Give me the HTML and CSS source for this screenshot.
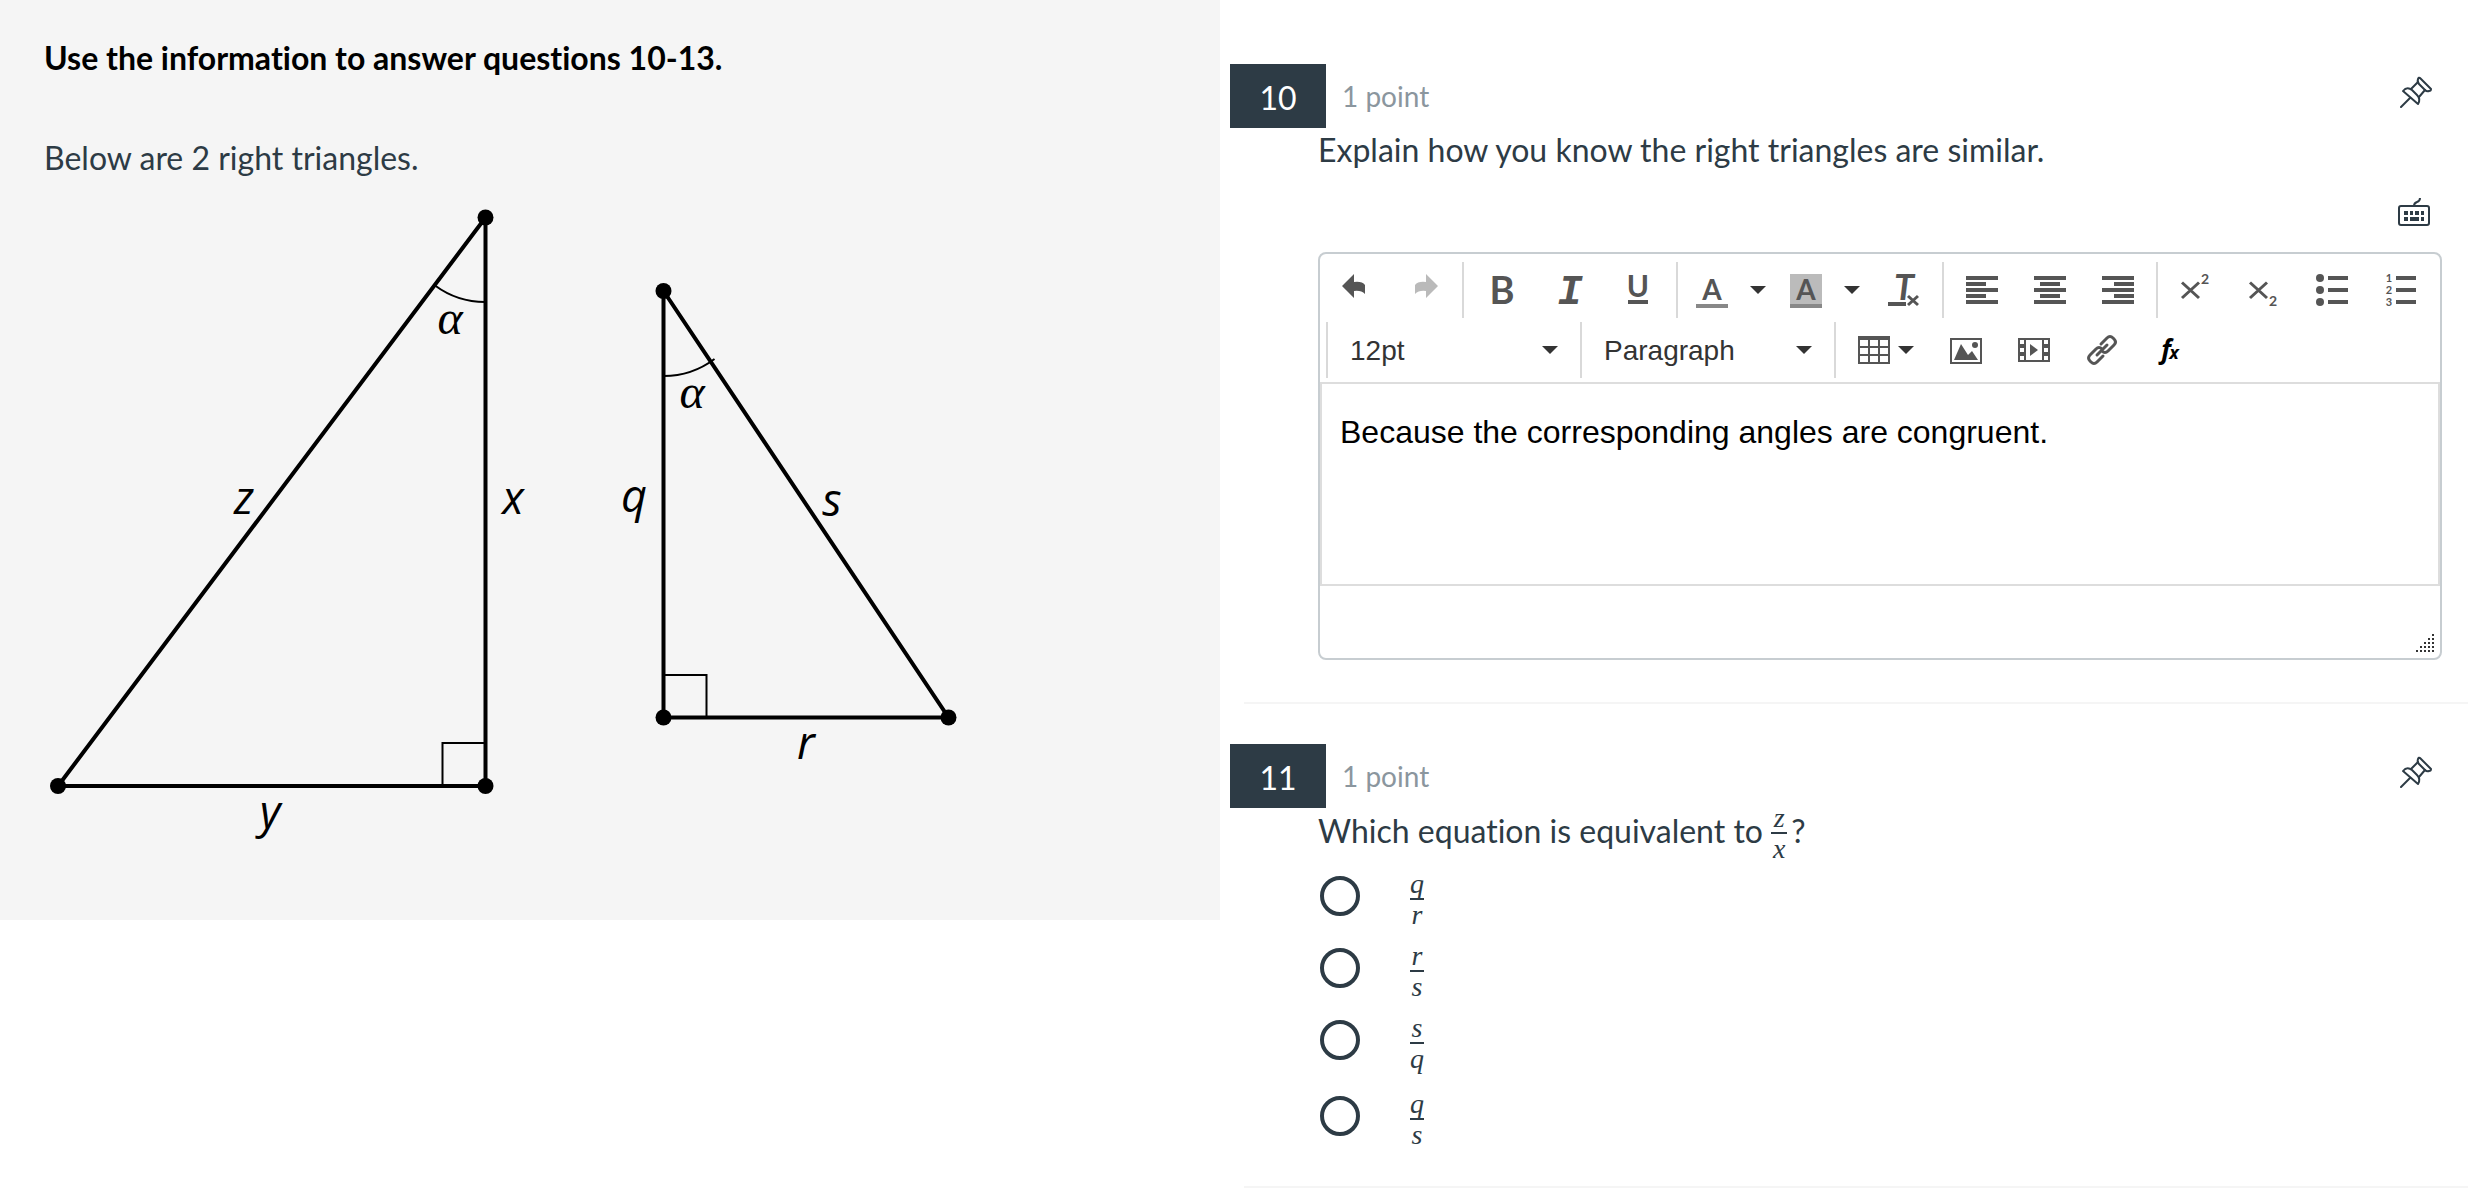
FILE: index.html
```html
<!DOCTYPE html>
<html lang="en">
<head>
  <meta charset="UTF-8" />
  <meta name="viewport" content="width=device-width, initial-scale=1.0"/>
  <title>Similar Triangles Quiz</title>
  <link rel="stylesheet" href="styles.css">
</head>
<body>

  <!-- shared icons -->
  <svg class="sprite" aria-hidden="true">
    <symbol id="caret" viewBox="0 0 16 8"><path d="M0 0h16l-8 8z" fill="#333"/></symbol>
    <symbol id="pin" viewBox="0 0 32 32">
      <g fill="none" stroke="#2d3b45" stroke-width="2" stroke-linejoin="round" stroke-linecap="round">
        <path d="M18 3q1-2 2-1l11 11q0 2-2 2q-2 1-4-1l-6-6q-2-2-1-5z"/>
        <path d="M18 6l-7 7M25 14l-6 7"/>
        <path d="M3 15q4-5 9-1l5 5q4 4 1 9z"/>
        <path d="M10 22l-9 9"/>
      </g>
    </symbol>
  </svg>

  <main class="quiz">
    <section class="stimulus">
      <h2>Use the information to answer questions 10-13.</h2>
      <p>Below are 2 right triangles.</p>
      <svg class="triangles" viewBox="44 200 920 640" role="img" aria-label="Two right triangles">
        <g class="side">
          <path d="M485.5 217.5V786H58z"/>
          <path d="M663.5 291V717.5H948.5z"/>
        </g>
        <g class="mark">
          <path d="M435 285.5A84.5 84.5 0 0 0 485.5 302"/>
          <path d="M663.5 376A84.5 84.5 0 0 0 714.5 359"/>
          <path d="M442.5 786V743H485.5"/>
          <path d="M663.5 675H706.5V717"/>
        </g>
        <g class="vertex">
          <circle cx="485.5" cy="217.5" r="8"/>
          <circle cx="485.5" cy="786" r="8"/>
          <circle cx="58" cy="786" r="8"/>
          <circle cx="663.5" cy="291" r="8"/>
          <circle cx="663.5" cy="717.5" r="8"/>
          <circle cx="948.5" cy="717.5" r="8"/>
        </g>
        <g class="angle">
          <text x="450" y="334">α</text>
          <text x="692" y="408">α</text>
        </g>
        <g class="name">
          <text x="244" y="514">z</text>
          <text x="513" y="514">x</text>
          <text x="270" y="828">y</text>
          <text x="634" y="512">q</text>
          <text x="832" y="516">s</text>
          <text x="806" y="759">r</text>
        </g>
      </svg>
    </section>

    <div class="questions">
      <section class="question">
        <header class="question-header">
          <span class="number">10</span>
          <span class="points">1 point</span>
          <button class="pin" aria-label="Pin question 10"><svg width="32" height="32"><use href="#pin"/></svg></button>
        </header>
        <div class="question-body">
          <label class="prompt" for="answer10">Explain how you know the right triangles are similar.</label>
          <button class="keyboard" aria-label="Keyboard shortcuts">
            <svg width="32" height="28" viewBox="0 0 32 28">
              <path d="M16 8q0-3 3-4t3-4" fill="none" stroke="#2d3b45" stroke-width="2"/>
              <rect x="1" y="8" width="30" height="19" rx="2" fill="none" stroke="#2d3b45" stroke-width="2"/>
              <path d="M6 13h4v4h-4zM12 13h3v4h-3zM17 13h4v4h-4zM23 13h3v4h-3zM6 19h4v4h-4zM12 19h9v4h-9zM23 19h3v4h-3z" fill="#2d3b45"/>
            </svg>
          </button>

          <div class="editor">
            <div class="toolbar">
              <div class="toolbar-row">
                <div class="group">
                  <button class="tool" aria-label="Undo"><svg class="icon" viewBox="0 0 32 32"><path d="M2 12L14 0v8q8-1 11 3v9q-4-4-11-3v7z"/></svg></button>
                  <button class="tool" aria-label="Redo" disabled><svg class="icon" viewBox="0 0 32 32"><path d="M30 12L18 0v8q-8-1-11 3v9q4-4 11-3v7z"/></svg></button>
                </div>
                <div class="group">
                  <button class="tool" aria-label="Bold"><svg class="icon" viewBox="0 0 32 32"><text class="glyph-bold" x="16" y="30">B</text></svg></button>
                  <button class="tool" aria-label="Italic"><svg class="icon" viewBox="0 0 32 32"><text class="glyph-italic" x="16" y="30">I</text></svg></button>
                  <button class="tool" aria-label="Underline"><svg class="icon" viewBox="0 0 32 32"><text class="glyph-under" x="16" y="23">U</text><path d="M6 26h20v4H6z"/></svg></button>
                </div>
                <div class="group">
                  <button class="tool split" aria-label="Text color"><svg class="icon" viewBox="0 0 32 32"><text class="glyph-color" x="16" y="26">A</text><path d="M0 30h32v4H0z" fill="#888"/></svg><svg class="caret"><use href="#caret"/></svg></button>
                  <button class="tool split" aria-label="Background color"><svg class="icon" viewBox="0 0 32 32"><path d="M0 0h32v30H0z" fill="#bbb"/><text class="glyph-color" x="16" y="26">A</text><path d="M0 30h32v4H0z" fill="#888"/></svg><svg class="caret"><use href="#caret"/></svg></button>
                  <button class="tool" aria-label="Clear formatting"><svg class="icon" viewBox="0 0 32 32"><text class="glyph-clear" x="16" y="26">T</text><path d="M0 28h18v4H0z"/><path d="M20 22l10 9M30 22l-10 9" stroke="#555" stroke-width="3"/></svg></button>
                </div>
                <div class="group">
                  <button class="tool" aria-label="Align left"><svg class="icon" viewBox="0 0 32 32"><path d="M0 2h32v4H0zM0 8h20v4H0zM0 14h32v4H0zM0 20h20v4H0zM0 26h32v4H0z"/></svg></button>
                  <button class="tool" aria-label="Align center"><svg class="icon" viewBox="0 0 32 32"><path d="M0 2h32v4H0zM6 8h20v4H6zM0 14h32v4H0zM6 20h20v4H6zM0 26h32v4H0z"/></svg></button>
                  <button class="tool" aria-label="Align right"><svg class="icon" viewBox="0 0 32 32"><path d="M0 2h32v4H0zM12 8h20v4H12zM0 14h32v4H0zM12 20h20v4H12zM0 26h32v4H0z"/></svg></button>
                </div>
                <div class="group">
                  <button class="tool" aria-label="Superscript"><svg class="icon" viewBox="0 0 32 32"><path d="M2 8.500L19 24M19 8.500L2 24" stroke="#555" stroke-width="3"/><text class="glyph-small" x="25" y="10">2</text></svg></button>
                  <button class="tool" aria-label="Subscript"><svg class="icon" viewBox="0 0 32 32"><path d="M2 8.500L19 24M19 8.500L2 24" stroke="#555" stroke-width="3"/><text class="glyph-small" x="25" y="32">2</text></svg></button>
                  <button class="tool" aria-label="Bullet list"><svg class="icon" viewBox="0 0 32 32"><circle cx="4" cy="4" r="4"/><circle cx="4" cy="16" r="4"/><circle cx="4" cy="28" r="4"/><path d="M12 2h20v4H12zM12 14h20v4H12zM12 26h20v4H12z"/></svg></button>
                  <button class="tool" aria-label="Numbered list"><svg class="icon" viewBox="0 0 32 32"><text class="glyph-list" x="5" y="8">1</text><text class="glyph-list" x="5" y="20">2</text><text class="glyph-list" x="5" y="32">3</text><path d="M12 2h20v4H12zM12 14h20v4H12zM12 26h20v4H12z"/></svg></button>
                </div>
              </div>
              <div class="toolbar-row">
                <div class="group">
                  <div class="picker">
                    <select aria-label="Font size"><option>12pt</option><option>14pt</option></select>
                    <svg class="caret"><use href="#caret"/></svg>
                  </div>
                </div>
                <div class="group">
                  <div class="picker">
                    <select aria-label="Block format"><option>Paragraph</option><option>Heading 2</option></select>
                    <svg class="caret"><use href="#caret"/></svg>
                  </div>
                </div>
                <div class="group">
                  <button class="tool menu" aria-label="Table"><svg class="icon" viewBox="0 0 32 32"><path fill-rule="evenodd" d="M0 2h32v28H0zM2 6v6h8V6zM12 6v6h8V6zM22 6v6h8V6zM2 14v6h8v-6zM12 14v6h8v-6zM22 14v6h8v-6zM2 22v6h8v-6zM12 22v6h8v-6zM22 22v6h8v-6z"/></svg><svg class="caret"><use href="#caret"/></svg></button>
                  <button class="tool" aria-label="Image"><svg class="icon" viewBox="0 0 32 32"><path fill-rule="evenodd" d="M0 4h32v26H0zM2 6v22h28V6z"/><path d="M4 26l7-16 7 11 4-4 6 9z"/><circle cx="25" cy="11" r="3"/></svg></button>
                  <button class="tool" aria-label="Media"><svg class="icon" viewBox="0 0 32 32"><path fill-rule="evenodd" d="M0 4h32v24H0zM2 6v4h4V6zM2 14v4h4v-4zM2 22v4h4v-4zM26 6v4h4V6zM26 14v4h4v-4zM26 22v4h4v-4zM8 6v20h16V6z"/><path d="M12 10l8 6-8 6z"/></svg></button>
                  <button class="tool" aria-label="Link"><svg class="icon" viewBox="0 0 32 32"><g fill="none" stroke="#555" stroke-width="3" stroke-linecap="round" stroke-linejoin="round"><path d="M11 21L21 11"/><path d="M15 10l6-6q3-3 6 0l1 1q3 3 0 6l-6 6q-3 3-6 0"/><path d="M17 22l-6 6q-3 3-6 0l-1-1q-3-3 0-6l6-6q3-3 6 0"/></g></svg></button>
                  <button class="tool" aria-label="Insert formula"><svg class="icon" viewBox="0 0 32 32"><text class="glyph-f" x="12" y="25">f</text><text class="glyph-fx" x="20" y="25">x</text></svg></button>
                </div>
              </div>
            </div>
            <textarea id="answer10" spellcheck="false">Because the corresponding angles are congruent.</textarea>
            <div class="statusbar">
              <svg width="18" height="18" viewBox="0 0 18 18"><path fill="#333" d="M16 0h2v2h-2zM12 4h2v2h-2zM16 4h2v2h-2zM8 8h2v2H8zM12 8h2v2h-2zM16 8h2v2h-2zM4 12h2v2H4zM8 12h2v2H8zM12 12h2v2h-2zM16 12h2v2h-2zM0 16h2v2H0zM4 16h2v2H4zM8 16h2v2H8zM12 16h2v2h-2zM16 16h2v2h-2z"/></svg>
            </div>
          </div>
        </div>
      </section>

      <section class="question">
        <header class="question-header">
          <span class="number">11</span>
          <span class="points">1 point</span>
          <button class="pin" aria-label="Pin question 11"><svg width="32" height="32"><use href="#pin"/></svg></button>
        </header>
        <div class="question-body">
          <p class="prompt">Which equation is equivalent to <span class="fraction"><i>z</i><i>x</i></span>?</p>
          <div class="options">
            <label class="option"><input type="radio" name="q11"><span class="fraction"><i>q</i><i>r</i></span></label>
            <label class="option"><input type="radio" name="q11"><span class="fraction"><i>r</i><i>s</i></span></label>
            <label class="option"><input type="radio" name="q11"><span class="fraction"><i>s</i><i>q</i></span></label>
            <label class="option"><input type="radio" name="q11"><span class="fraction"><i>q</i><i>s</i></span></label>
          </div>
        </div>
      </section>
    </div>
  </main>

</body>
</html>
```
FILE: styles.css
```css
* {
  box-sizing: border-box;
  margin: 0;
  padding: 0;
}

body {
  font-family: Lato, sans-serif;
  font-size: 32px;
  line-height: 48px;
  font-variant-ligatures: none;
  color: #2d3b45;
  background-color: #fff;
}

button {
  background: none;
  border: none;
  cursor: pointer;
}

svg {
  display: block;
}

.sprite {
  display: none;
}

.quiz {
  display: flex;
  align-items: flex-start;
}

/* left panel */
.stimulus {
  flex: 0 0 calc(50% - 23px);
  padding: 34px 44px 80px;
  background-color: #f5f5f5;
}

.stimulus h2 {
  font-size: 32px;
  font-weight: bold;
  color: #000;
  margin-bottom: 52px;
}

.stimulus p {
  margin-bottom: 18px;
}

.triangles {
  width: 920px;
  max-width: 100%;
}

.side {
  fill: none;
  stroke: #000;
  stroke-width: 4;
}

.mark {
  fill: none;
  stroke: #000;
  stroke-width: 2;
}

.angle {
  font-family: "Liberation Serif", serif;
  font-style: italic;
  font-size: 48px;
  text-anchor: middle;
}

.name {
  font-family: "Open Sans", sans-serif;
  font-style: italic;
  font-size: 45px;
  text-anchor: middle;
}

/* questions */
.questions {
  flex: 1;
  padding: 24px 18px 0 24px;
}

.question {
  padding: 40px 26px 38px 0;
  border-bottom: 2px solid #f5f5f5;
}

.question-header {
  display: flex;
  align-items: flex-start;
  margin-left: -14px;
  padding-right: 10px;
}

.number {
  width: 96px;
  height: 64px;
  line-height: 68px;
  text-align: center;
  color: #fff;
  background-color: #2d3b45;
}

.points {
  margin-left: 16px;
  font-size: 28px;
  line-height: 64px;
  color: #8b969e;
}

.pin {
  margin: 12px 0 0 auto;
}

.question-body {
  margin-left: 74px;
}

.prompt {
  display: block;
  line-height: 44px;
}

.keyboard {
  display: block;
  margin: 26px 12px 26px auto;
}

/* editor */
.editor {
  margin-bottom: 4px;
  border: 2px solid #c7cdd1;
  border-radius: 8px;
  overflow: hidden;
}

.toolbar {
  display: flex;
  flex-direction: column;
  gap: 4px;
  padding: 8px 2px 4px;
  border-bottom: 2px solid #ddd;
}

.toolbar-row {
  display: flex;
  height: 56px;
}

.group {
  display: flex;
  margin-left: 4px;
  padding-left: 4px;
  border-left: 2px solid #d9d9d9;
}

.toolbar-row:first-child .group:first-child {
  margin-left: 0;
  padding-left: 0;
  border-left: none;
}

.tool {
  display: flex;
  align-items: center;
  padding: 0 18px;
}

.split {
  gap: 22px;
  padding: 0 10px 0 14px;
}

.menu {
  gap: 8px;
}

.tool:disabled {
  opacity: 0.4;
}

.icon {
  width: 32px;
  height: 32px;
  fill: #555;
  overflow: visible;
}

.icon text {
  font-family: Lato, sans-serif;
  font-weight: bold;
  text-anchor: middle;
}

.caret {
  width: 16px;
  height: 8px;
}

.icon .glyph-bold {
  font-size: 38px;
}

.icon .glyph-italic {
  font-family: "Liberation Mono", monospace;
  font-style: italic;
  font-size: 42px;
}

.icon .glyph-under {
  font-size: 30px;
}

.icon .glyph-color {
  font-size: 28px;
}

.icon .glyph-clear {
  font-style: italic;
  font-size: 36px;
}

.icon .glyph-small {
  font-size: 14px;
}

.icon .glyph-list {
  font-size: 11px;
}

.icon .glyph-f,
.icon .glyph-fx {
  font-family: "Open Sans", sans-serif;
  font-style: italic;
  font-size: 26px;
  fill: #000;
}

.icon .glyph-fx {
  font-size: 18px;
}

.picker {
  position: relative;
  width: 244px;
}

.picker select {
  width: 100%;
  height: 56px;
  padding: 0 18px;
  appearance: none;
  border: none;
  background: none;
  font-family: "Liberation Sans", Arial, sans-serif;
  font-size: 28px;
  color: #333;
}

.picker .caret {
  position: absolute;
  top: 24px;
  right: 18px;
  pointer-events: none;
}

.editor textarea {
  display: block;
  width: 100%;
  height: 202px;
  padding: 24px 18px;
  border: 2px solid #ddd;
  border-top: none;
  resize: none;
  outline: none;
  font-family: "Liberation Sans", Arial, sans-serif;
  font-size: 32px;
  line-height: 48px;
  color: #000;
}

.statusbar {
  display: flex;
  justify-content: flex-end;
  align-items: flex-end;
  height: 72px;
  padding: 6px;
}

/* stacked fraction, the bar is the top border of the second letter */
.fraction {
  display: inline-flex;
  flex-direction: column;
  vertical-align: middle;
  text-align: center;
  min-width: 14px;
  font-family: "Liberation Serif", serif;
  font-size: 28px;
}

.prompt .fraction {
  min-width: 16px;
  margin-right: 4px;
}

.fraction i:first-child {
  height: 24px;
  line-height: 20px;
}

.fraction i:last-child {
  height: 30px;
  line-height: 30px;
  border-top: 2px solid #2d3b45;
}

.options {
  display: flex;
  flex-direction: column;
  gap: 18px;
  margin-top: 12px;
}

.option {
  display: flex;
  align-items: flex-start;
  gap: 50px;
}

.option input {
  appearance: none;
  width: 40px;
  height: 40px;
  margin: 2px 0 0 2px;
  border: 4px solid #2d3b45;
  border-radius: 50%;
}

.option input:checked {
  background-color: #2d3b45;
  box-shadow: inset 0 0 0 6px #fff;
}

.option:last-child {
  margin-top: 4px;
}
```
